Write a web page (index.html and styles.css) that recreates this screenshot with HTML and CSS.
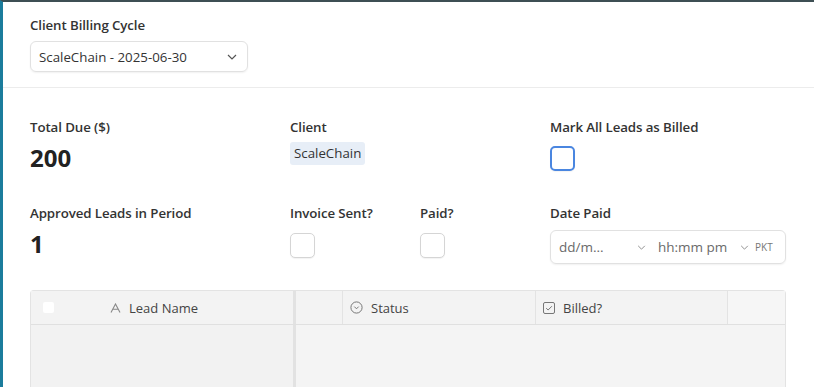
FILE: index.html
```html
<!DOCTYPE html>
<html lang="en">
<head>
    <meta charset="UTF-8">
    <title>Client Billing</title>
    <link rel="stylesheet" href="styles.css">
</head>
<body>
    <div class="app">
        <div class="cycle">
            <div class="label">Client Billing Cycle</div>
            <div class="select">
                <span>ScaleChain - 2025-06-30</span>
                <svg class="chev" width="10" height="6" viewBox="0 0 10 6"><path d="M1 1l4 4 4-4" fill="none" stroke="#555" stroke-width="1.2"/></svg>
            </div>
        </div>

        <div class="fields">
            <div class="field">
                <div class="label">Total Due ($)</div>
                <div class="value">200</div>
            </div>
            <div class="field">
                <div class="label">Client</div>
                <div><span class="chip">ScaleChain</span></div>
            </div>
            <div class="field">
                <div class="label">Mark All Leads as Billed</div>
                <div class="check focus"></div>
            </div>

            <div class="field">
                <div class="label">Approved Leads in Period</div>
                <div class="value">1</div>
            </div>
            <div class="pair">
                <div class="field sub">
                    <div class="label">Invoice Sent?</div>
                    <div class="check"></div>
                </div>
                <div class="field sub">
                    <div class="label">Paid?</div>
                    <div class="check"></div>
                </div>
            </div>
            <div class="field">
                <div class="label">Date Paid</div>
                <div class="datetime">
                    <span class="part date">dd/m...</span>
                    <svg class="chev" width="9" height="5" viewBox="0 0 10 6"><path d="M1 1l4 4 4-4" fill="none" stroke="#888" stroke-width="1.1"/></svg>
                    <span class="part time">hh:mm pm</span>
                    <svg class="chev" width="9" height="5" viewBox="0 0 10 6"><path d="M1 1l4 4 4-4" fill="none" stroke="#888" stroke-width="1.1"/></svg>
                    <span class="tz">PKT</span>
                </div>
            </div>
        </div>

        <div class="table">
            <div class="thead">
                <div class="th first">
                    <span class="rowcheck"></span>
                    <span class="head-title">
                        <svg width="11" height="10" viewBox="0 0 11 10"><path d="M1 9.5L5.5 1 10 9.5M2.8 6.3h5.4" fill="none" stroke="#888" stroke-width="1.1"/></svg>
                        Lead Name
                    </span>
                </div>
                <div class="th spacer"></div>
                <div class="th status">
                    <svg width="13" height="13" viewBox="0 0 13 13"><circle cx="6.5" cy="6.5" r="5.6" fill="none" stroke="#777" stroke-width="1"/><path d="M4.3 5.6l2.2 2.2 2.2-2.2" fill="none" stroke="#777" stroke-width="1"/></svg>
                    Status
                </div>
                <div class="th billed">
                    <svg width="12" height="12" viewBox="0 0 12 12"><rect x="0.5" y="0.5" width="11" height="11" rx="1.5" fill="none" stroke="#777" stroke-width="1"/><path d="M3.2 6.2l1.9 1.8 3.8-3.8" fill="none" stroke="#777" stroke-width="1"/></svg>
                    Billed?
                </div>
                <div class="th add"></div>
            </div>
            <div class="tbody">
                <div class="frozen"></div>
                <div class="rest"></div>
            </div>
        </div>
    </div>
</body>
</html>
```

FILE: styles.css
```css
* {
    box-sizing: border-box;
}

body {
    margin: 0;
    background: #fff;
    font-family: "Open Sans", "Noto Sans", sans-serif;
    color: #2e2e2e;
    overflow: hidden;
}

.app {
    height: 387px;
    border-top: 2px solid #3e4f54;
    border-left: 3px solid #1b7c9c;
    overflow: hidden;
}

.label {
    font-size: 13.3px;
    font-weight: 600;
    line-height: 18px;
    color: #333;
    letter-spacing: -0.1px;
}

.cycle {
    padding: 14px 0 15px 27px;
    border-bottom: 1px solid #ececec;
}

.select {
    margin-top: 7px;
    width: 218px;
    height: 31px;
    border: 1px solid #e1e1e1;
    border-radius: 6px;
    box-shadow: 0 1px 2px rgba(0, 0, 0, 0.06);
    display: flex;
    align-items: center;
    justify-content: space-between;
    padding: 0 10px 0 8px;
    font-size: 13.3px;
    color: #333;
}

.fields {
    display: grid;
    grid-template-columns: 260px 260px 236px;
    grid-template-rows: 86px 86px;
    padding: 30px 0 0 27px;
}

.field {
    display: flex;
    flex-direction: column;
}

.value {
    font-size: 24px;
    font-weight: 700;
    line-height: 28px;
    margin-top: 8px;
    color: #222;
}

.chip {
    display: inline-block;
    margin-top: 6px;
    padding: 2px 4px;
    background: #e7eef7;
    border-radius: 3px;
    font-size: 13.3px;
    line-height: 19px;
    color: #333;
}

.check {
    width: 25px;
    height: 25px;
    margin-top: 11px;
    border: 1px solid #d5d5d5;
    border-radius: 5px;
    background: #fff;
    box-shadow: 0 1px 1px rgba(0, 0, 0, 0.05);
}

.check.focus {
    border: 2px solid #4a86e0;
    margin-top: 10px;
}

.pair {
    display: flex;
}

.sub {
    width: 131px;
}

.datetime {
    margin-top: 8px;
    width: 236px;
    height: 34px;
    border: 1px solid #e1e1e1;
    border-radius: 6px;
    box-shadow: 0 1px 2px rgba(0, 0, 0, 0.06);
    display: flex;
    align-items: center;
    padding: 0 8px;
    font-size: 13.5px;
    color: #6a6a6a;
}

.date {
    width: 78px;
}

.datetime .chev {
    margin-right: 12px;
}

.time {
    width: 82px;
}

.tz {
    font-size: 10px;
    color: #777;
    margin-left: -6px;
}

.table {
    margin: 0 0 0 27px;
    width: 756px;
    border: 1px solid #e3e3e3;
    border-bottom: none;
    border-radius: 4px 4px 0 0;
    background: #f4f4f4;
}

.thead {
    display: flex;
    height: 34px;
    border-bottom: 1px solid #e0e0e0;
    background: #f3f3f3;
}

.th {
    display: flex;
    align-items: center;
    font-size: 13px;
    color: #444;
    border-right: 1px solid #e3e3e3;
}

.th svg {
    margin-right: 8px;
}

.first {
    width: 265px;
    padding-left: 12px;
    border-right: 3px solid #e2e2e2;
}

.rowcheck {
    width: 11px;
    height: 11px;
    background: #fff;
    border-radius: 2px;
}

.head-title {
    display: flex;
    align-items: center;
    margin-left: 56px;
}

.spacer {
    width: 47px;
}

.status {
    width: 193px;
    padding-left: 7px;
}

.billed {
    width: 192px;
    padding-left: 7px;
}

.add {
    flex: 1;
    border-right: none;
    background: #f6f6f6;
}

.tbody {
    display: flex;
    height: 80px;
}

.frozen {
    width: 265px;
    background: #f2f2f2;
    border-right: 3px solid #e2e2e2;
}

.rest {
    flex: 1;
    background: #f4f4f4;
}
```
